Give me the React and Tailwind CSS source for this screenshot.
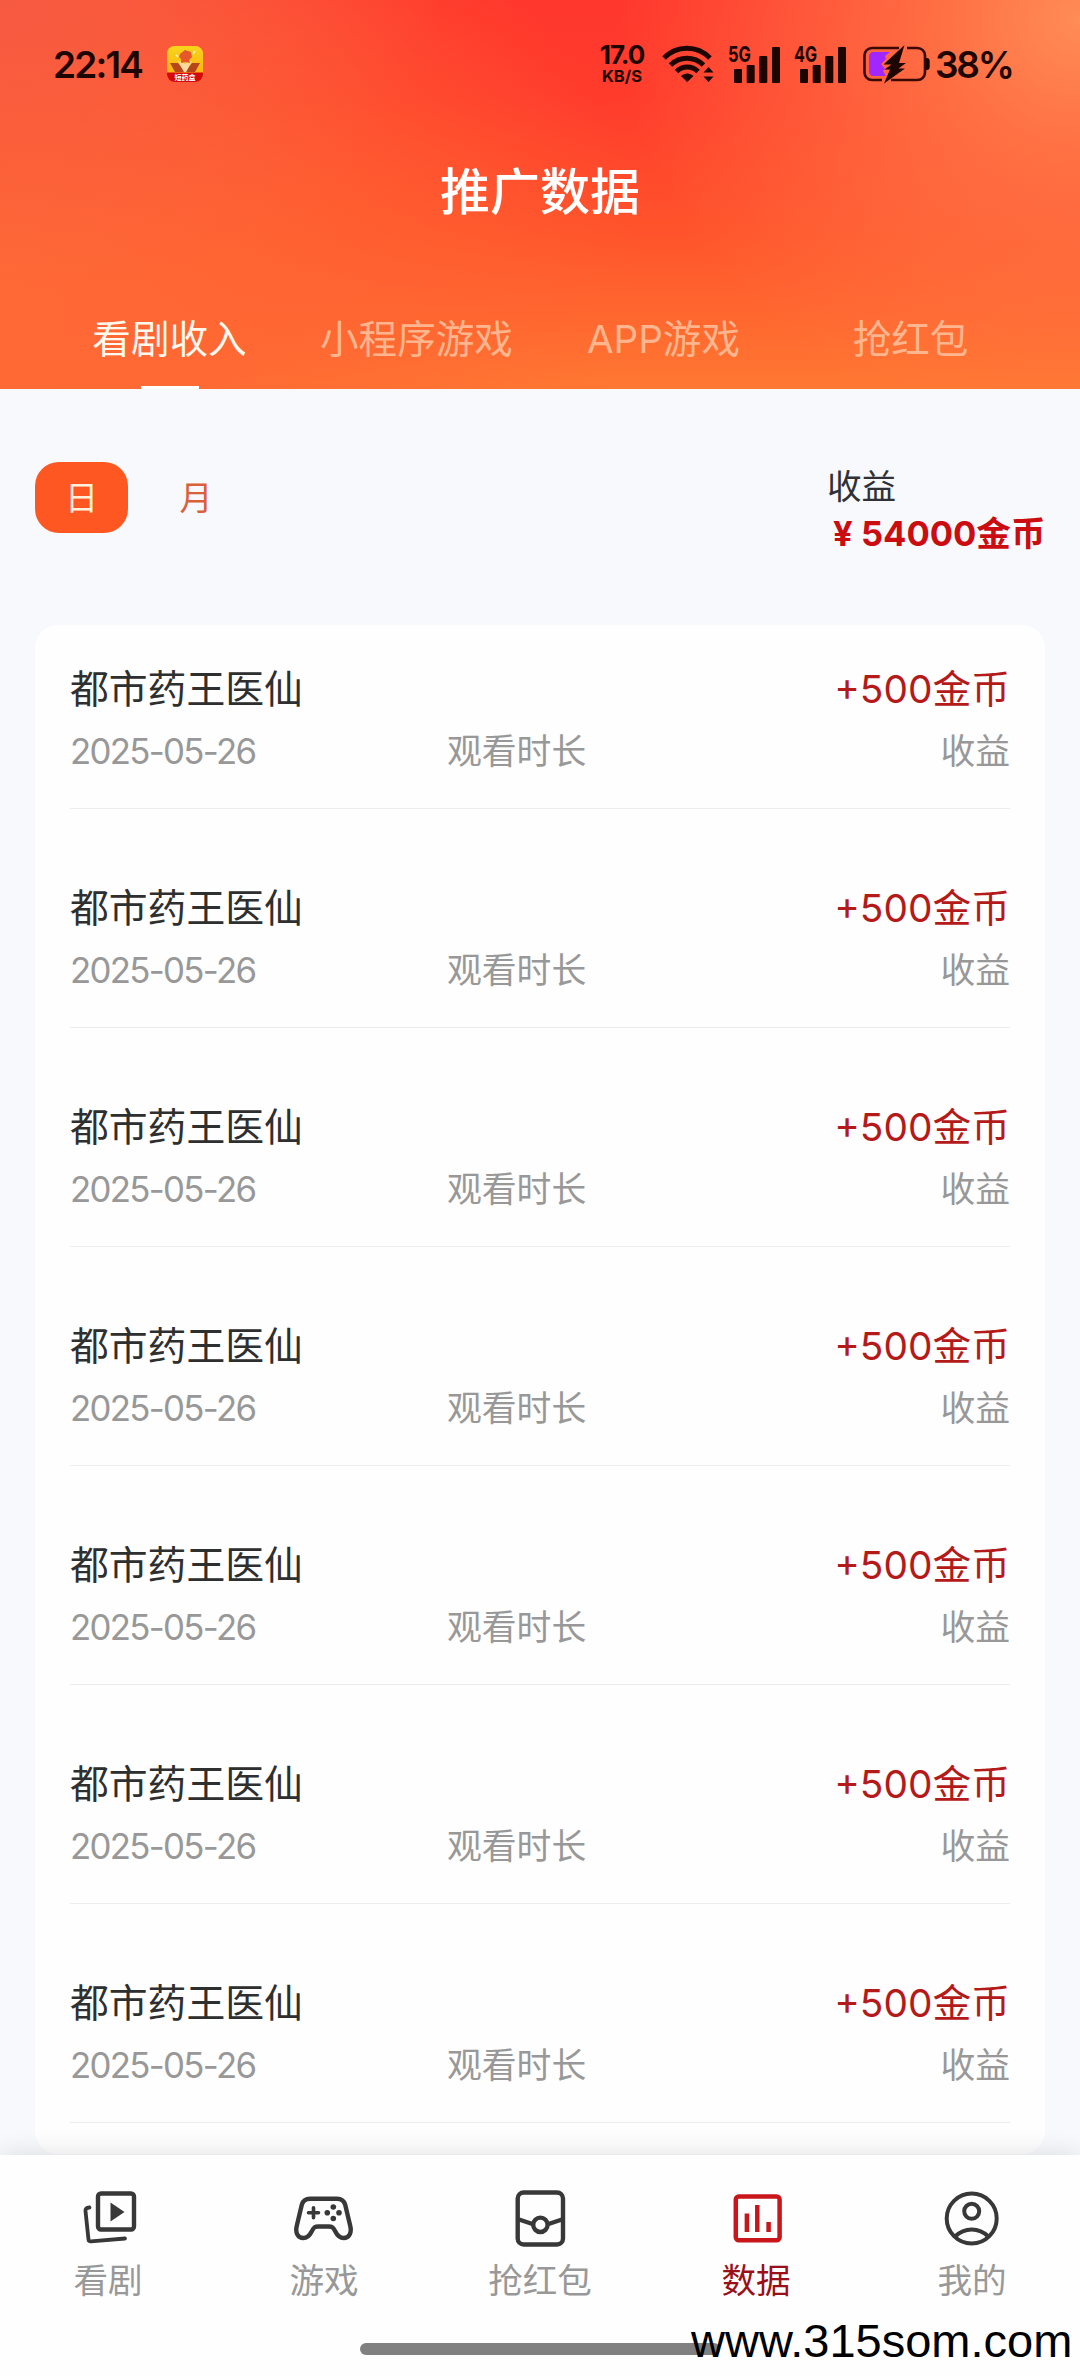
const tabs = ['看剧收入', '小程序游戏', 'APP游戏', '抢红包'];

const records = Array.from({ length: 7 }, (_, id) => ({
  id,
  title: '都市药王医仙',
  date: '2025-05-26',
  amount: '+500金币',
}));

function DramaIcon() {
  return (
    <svg viewBox="0 0 60 60" className="size-[60px]" fill="none" stroke="currentColor" strokeWidth="4.400" strokeLinecap="round" strokeLinejoin="round">
      <rect x="20" y="5.500" width="36" height="36" rx="3" />
      <path d="M11.500 19.500c-3 .3-4.200 1.200-4 3.500l3 28.500c.1 1.500 1 2 2.500 1.800L47 50.500" strokeWidth="3.800" />
      <path d="M32.500 14.500v19L46.500 24z" fill="currentColor" stroke="none" />
    </svg>
  );
}

function GameIcon() {
  return (
    <svg viewBox="0 0 60 60" className="size-[60px]" fill="none" stroke="currentColor" strokeWidth="4.400" strokeLinecap="round" strokeLinejoin="round">
      <path d="M16 10.700h27c4.500 0 7 2 8.200 6l5 21c1.800 7-1 12.300-6.500 12.300-4 0-6.200-2.200-8.200-6.300-2.500-5-3.500-5.200-7-5.200H24.500c-3.500 0-4.500.2-7 5.200-2 4.100-4.200 6.300-8.200 6.300-5.500 0-8.300-5.300-6.500-12.300l5-21c1.200-4 3.700-6 8.200-6z" />
      <path d="M14.500 24.800h10M19.500 19.800v10" strokeWidth="3.600" />
      <g fill="currentColor" stroke="none">
        <circle cx="39.300" cy="19" r="2.800" />
        <circle cx="39.300" cy="30.500" r="2.800" />
        <circle cx="33.300" cy="24.800" r="2.800" />
        <circle cx="45" cy="24.800" r="2.800" />
      </g>
    </svg>
  );
}

function PacketIcon() {
  return (
    <svg viewBox="0 0 60 60" className="size-[60px]" fill="none" stroke="currentColor" strokeWidth="4.400">
      <rect x="7.700" y="4.500" width="45.300" height="52" rx="6" />
      <path d="M9 31.500l13.500 4.500M52 31.500L38.500 36" />
      <circle cx="30.400" cy="36.800" r="7.200" />
    </svg>
  );
}

function DataIcon() {
  return (
    <svg viewBox="0 0 60 60" className="size-[60px]" fill="none" stroke="currentColor" strokeWidth="4.500">
      <rect x="9.800" y="8.500" width="43.800" height="43.800" rx="3" />
      <path d="M20.900 25.500V44M31.300 17v27M42.600 34v10" />
    </svg>
  );
}

function UserIcon() {
  return (
    <svg viewBox="0 0 60 60" className="size-[60px]" fill="none" stroke="currentColor" strokeWidth="4">
      <circle cx="29.700" cy="30.500" r="25" />
      <circle cx="29.700" cy="23.300" r="7.500" />
      <path d="M13 48.500c9.500-9.500 24-9.500 33.400 0" />
    </svg>
  );
}

const navItems = [
  { label: '看剧', icon: DramaIcon },
  { label: '游戏', icon: GameIcon },
  { label: '抢红包', icon: PacketIcon },
  { label: '数据', icon: DataIcon, active: true },
  { label: '我的', icon: UserIcon },
];

function AppBadge() {
  return (
    <svg viewBox="0 0 36 36" className="ml-[25px] size-9">
      <defs>
        <linearGradient id="badge" x1="0" y1="0" x2="0" y2="1">
          <stop offset="0" stopColor="#f7d51b" />
          <stop offset="1" stopColor="#fba711" />
        </linearGradient>
        <clipPath id="badge-clip">
          <rect width="36" height="36" rx="7.500" />
        </clipPath>
      </defs>
      <g clipPath="url(#badge-clip)">
        <rect width="36" height="36" fill="url(#badge)" />
        <path d="M3 17l8 0 7 9 7-9 8 0-5 9H8z" fill="#b5451a" />
        <path d="M11 15l7 13 7-13-4 1-3 2-3-2z" fill="#fbd9a0" />
        <path d="M13 8l5-4 6 2 1 5-3 3 1 3-5-1-4 1v-4l-2-2z" fill="#e8572a" />
        <path d="M9 9l2 2M28 5l-2 3" stroke="#fff3c4" strokeWidth="1.500" />
        <rect y="26.500" width="36" height="9.500" fill="#d5080c" />
        <text x="18" y="34" textAnchor="middle" fontSize="7" fontWeight="700" fill="#fff">短药盒</text>
      </g>
    </svg>
  );
}

function WifiIcon() {
  return (
    <svg viewBox="0 0 52 38" className="h-[38px] w-[52px]" fill="none" stroke="currentColor" strokeWidth="5">
      <path d="M2 13c13-13 33-13 46 0" />
      <path d="M8.500 20c9.500-9 23.500-9 33 0" />
      <path d="M14.500 26.500c6-6 15.500-6 21.500 0" />
      <path d="M19 31c3.500-3.500 9-3.500 12.500 0L25.200 37z" fill="currentColor" stroke="none" />
      <path d="M46.500 22l5 5.500h-10zM46.500 37l5-5.500h-10z" fill="currentColor" stroke="none" />
    </svg>
  );
}

function Signal({ type }) {
  return (
    <svg viewBox="0 -10 54 60" className="h-[60px] w-[54px]" fill="currentColor">
      <text x="0" y="17.500" fontSize="22" fontWeight="700" textLength="23" lengthAdjust="spacingAndGlyphs">{type}</text>
      <rect x="6" y="25" width="8" height="14" rx="1" />
      <rect x="18.700" y="21" width="8" height="18" rx="1" />
      <rect x="31.300" y="12" width="8" height="27" rx="1" />
      <rect x="44" y="3" width="8" height="36" rx="1" />
    </svg>
  );
}

function Battery() {
  return (
    <svg viewBox="0 0 68 40" className="h-10 w-[68px]">
      <path d="M37 4H10a7.500 7.500 0 0 0-7.500 7.500v17A7.500 7.500 0 0 0 10 36h10M45 4h10.500a7.500 7.500 0 0 1 7.500 7.500v17a7.500 7.500 0 0 1-7.500 7.500H29" fill="none" stroke="#3a0903" strokeWidth="2.600" />
      <path d="M28 8H11.500A4.500 4.500 0 0 0 7 12.500v15a4.500 4.500 0 0 0 4.500 4.500H24l-3-5 2-2-4-5 5-5-1-3z" fill="#a126ff" />
      <path d="M42.500 1L21.500 20.500h8l-7 5h5.500L22 39.500 43 24.500h-6.500l7.500-5.500h-7z" fill="#1d0502" />
      <path d="M63.500 14h1.200a3 3 0 0 1 3 3v6a3 3 0 0 1-3 3h-1.200z" fill="#1d0502" />
    </svg>
  );
}

function StatusBar() {
  return (
    <div className="flex h-[128px] items-center pl-[53px] text-[#1d0502]">
      <span className="w-[89px] text-[37px] font-semibold leading-none tracking-[-1.800px]">22:14</span>
      <AppBadge />
      <div className="ml-[394px] flex w-[50px] flex-col items-center">
        <span className="text-[26px] font-bold leading-[22px] tracking-[-1px]">17.0</span>
        <span className="mt-[2px] text-[16.500px] font-bold leading-[16px]">KB/S</span>
      </div>
      <div className="ml-[15px] flex items-center">
        <WifiIcon />
        <div className="ml-[14px]"><Signal type="5G" /></div>
        <div className="ml-3"><Signal type="4G" /></div>
        <div className="ml-[14px]"><Battery /></div>
        <span className="ml-[5px] whitespace-nowrap text-[37px] font-semibold leading-none tracking-[-2.300px]">38%</span>
      </div>
    </div>
  );
}

function Header() {
  return (
    <header className="h-[389px] shrink-0 bg-[radial-gradient(ellipse_460px_420px_at_100%_5%,#ff8c57_0%,#ff7b49cc_32%,#ff6a3e00_100%),radial-gradient(ellipse_440px_300px_at_0%_0%,#f65a42_0%,#f85c3fbb_35%,#ff603400_100%),radial-gradient(ellipse_640px_440px_at_0%_65%,#ff6a36_0%,#ff6634cc_40%,#ff603400_100%),linear-gradient(180deg,#ff372d_0%,#ff3c2c_25%,#ff542b_60%,#ff7832_100%)]">
      <StatusBar />
      <h1 className="h-[126px] pt-px text-center text-[50px] font-medium leading-[126px] text-white">推广数据</h1>
      <div className="mt-[37px] grid grid-cols-4 px-[46px]">
        {tabs.map((tab, i) => (
          <div key={tab} className="flex flex-col items-center">
            <span className={`h-[95px] text-[38.600px] leading-[97px] ${i === 0 ? 'text-[#fff8ec]' : 'text-[#ffb58e]'}`}>{tab}</span>
            {i === 0 && <span className="h-[3px] w-[58px] bg-white" />}
          </div>
        ))}
      </div>
    </header>
  );
}

function Summary() {
  return (
    <div className="flex h-[236px] pl-[35px]">
      <div className="mt-[73px] flex h-[71px] items-center text-[33px]">
        <span className="grid h-[71px] w-[93px] place-items-center rounded-[24px] bg-[#ff5722] pt-0.5 text-[#fff0dc]">日</span>
        <span className="grid w-[136px] place-items-center pt-0.5 text-[#d9603a]">月</span>
      </div>
      <div className="ml-auto mt-[74px] w-[253px] text-[34.600px] leading-[47px]">
        <p className="text-[#2f3136]">收益</p>
        <p className="whitespace-nowrap pl-[6px] font-bold text-[#cb0c10]">¥ 54000金币</p>
      </div>
    </div>
  );
}

function RecordRow({ record }) {
  return (
    <div className="h-[184px] border-b border-[#ececec] pt-10">
      <div className="flex justify-between text-[38.800px] leading-[48px]">
        <span className="text-[#2e2f2f]">{record.title}</span>
        <span className="text-[#b51a1a]">{record.amount}</span>
      </div>
      <div className="mt-4 flex text-[34.800px] leading-[44px] text-[#989898]">
        <span className="w-[377px] tracking-[-1.700px]">{record.date}</span>
        <span>观看时长</span>
        <span className="ml-auto">收益</span>
      </div>
    </div>
  );
}

function BottomNav() {
  return (
    <nav className="relative grid h-[221px] shrink-0 grid-cols-5 bg-[#fefefe] pt-[33px] shadow-[0_-2px_24px_rgba(0,0,0,0.11)]">
      {navItems.map(({ label, icon: Icon, active }) => (
        <div key={label} className={`flex flex-col items-center ${active ? 'text-[#c8161a]' : 'text-[#383838]'}`}>
          <Icon />
          <span className={`mt-[9px] text-[34.600px] leading-[46px] ${active ? 'text-[#9a1018]' : 'text-[#989898]'}`}>{label}</span>
        </div>
      ))}
      <span className="absolute left-[360px] top-[188px] h-3 w-[360px] rounded-full bg-[#808080]" />
      <span className="absolute left-[691px] top-[161px] whitespace-nowrap font-['Liberation_Sans',Arial,sans-serif] text-[47px] leading-[50px] text-black">www.315som.com</span>
    </nav>
  );
}

export default function App() {
  return (
    <div className="flex h-[2376px] w-[1080px] flex-col overflow-hidden bg-[#f8f9fd] font-['Inter','Noto_Sans_CJK_SC',sans-serif]">
      <Header />
      <main className="min-h-0 flex-1">
        <Summary />
        <section className="mx-[35px] flex flex-col gap-[35px] rounded-[23px] bg-[#fefefe] px-[35px] pb-[31px]">
          {records.map((record) => <RecordRow key={record.id} record={record} />)}
        </section>
      </main>
      <BottomNav />
    </div>
  );
}
